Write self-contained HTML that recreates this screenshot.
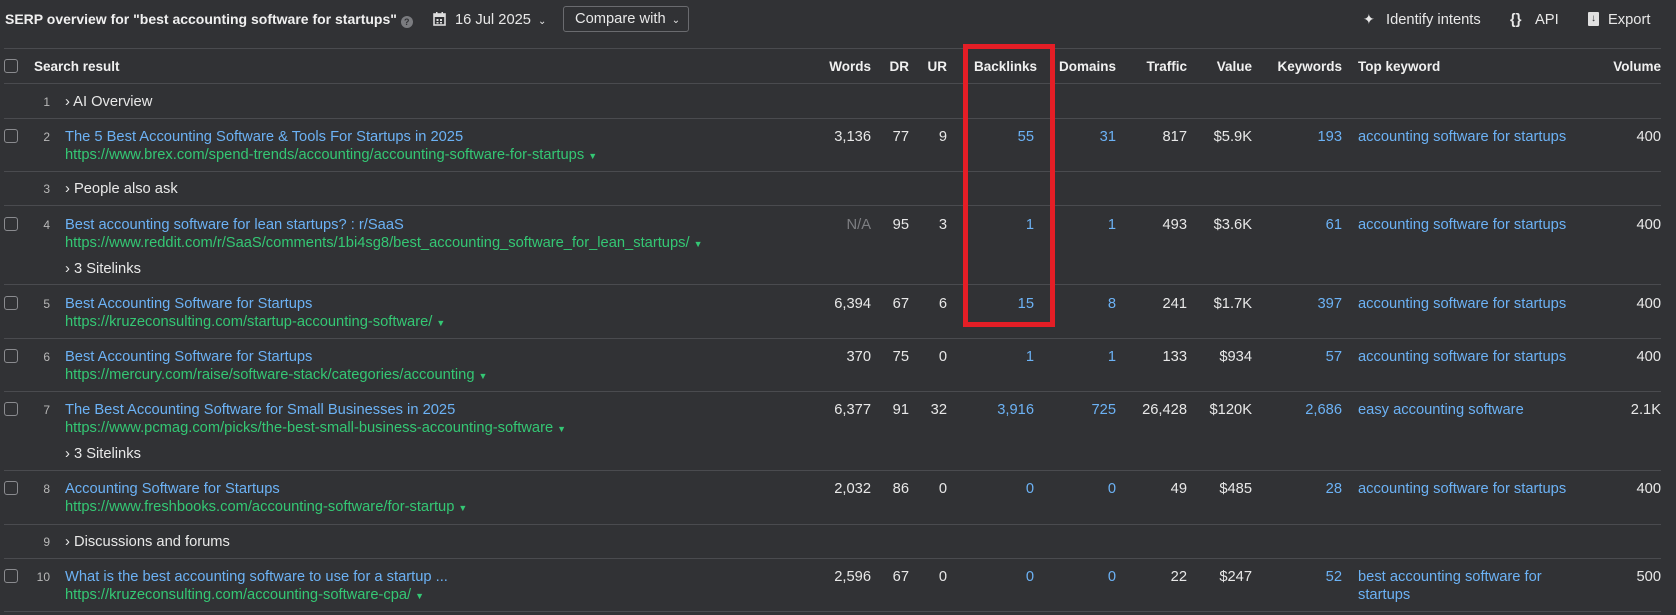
<!DOCTYPE html>
<html><head><meta charset="utf-8"><style>
*{margin:0;padding:0;box-sizing:border-box}
body{width:1676px;height:615px;background:#313235;color:#e8e8e8;font-family:"Liberation Sans",Arial,sans-serif;font-size:14.7px;position:relative;overflow:hidden}
.a{position:absolute;white-space:nowrap;line-height:20px}
.r{text-align:right}
.b{color:#6cb2f5}
.g{color:#34c774}
.line{position:absolute;left:4px;width:1657px;height:1px;background:#4a4b4f}
.cb{position:absolute;left:4px;width:14px;height:14px;border:1px solid #8a8b8f;border-radius:3px}
.n{color:#b8b8b8;font-size:12px}
.h{font-weight:bold;font-size:13.5px;color:#f0f0f0}
.tri{font-size:9px;margin-left:4px}
.two{line-height:18px;margin-top:1px}
</style></head><body>
<div class="a h" style="left:5px;top:9px;font-size:14px">SERP overview for "best accounting software for startups" <span style="display:inline-block;width:12px;height:12px;border-radius:50%;background:#7b7c80;vertical-align:-1px;font-size:9px;color:#313235;text-align:center;line-height:12px">?</span></div>
<svg class="a" style="left:433px;top:12px" width="13" height="14" viewBox="0 0 13 14"><rect x="1" y="2" width="11" height="11" fill="none" stroke="#ddd" stroke-width="1.6"/><rect x="1" y="2" width="11" height="3" fill="#ddd"/><rect x="3" y="0" width="1.5" height="3" fill="#ddd"/><rect x="8.5" y="0" width="1.5" height="3" fill="#ddd"/><rect x="3.5" y="7" width="2" height="2" fill="#ddd"/><rect x="7" y="7" width="2" height="2" fill="#ddd"/><rect x="3.5" y="10" width="2" height="1.5" fill="#ddd"/><rect x="7" y="10" width="2" height="1.5" fill="#ddd"/></svg>
<div class="a" style="left:455px;top:10px">16 Jul 2025 <span style="font-size:10px;margin-left:3px">&#8964;</span></div>
<div class="a" style="left:563px;top:6px;width:126px;height:26px;border:1px solid #6a6b6f;border-radius:3px;padding:2px 0 0 11px">Compare with <span style="font-size:10px;margin-left:2px">&#8964;</span></div>
<div class="a" style="left:1363px;top:9px;font-size:14px">&#10022;</div>
<div class="a" style="left:1386px;top:10px">Identify intents</div>
<div class="a" style="left:1510px;top:10px;font-weight:bold">{}</div>
<div class="a" style="left:1535px;top:10px">API</div>
<div class="a" style="left:1588px;top:12px;width:11px;height:14px;background:#e0e0e0;border-radius:1px;color:#313235;font-size:10px;line-height:14px;text-align:center;font-weight:bold">&#8595;</div>
<div class="a" style="left:1608px;top:10px">Export</div>

<div class="line" style="top:48px"></div>
<div class="cb" style="top:59px"></div>
<div class="a h" style="left:34px;top:57px">Search result</div>
<div class="a h r" style="right:805px;top:57px">Words</div>
<div class="a h r" style="right:767px;top:57px">DR</div>
<div class="a h r" style="right:729px;top:57px">UR</div>
<div class="a h" style="left:974px;top:57px">Backlinks</div>
<div class="a h r" style="right:560px;top:57px">Domains</div>
<div class="a h r" style="right:489px;top:57px">Traffic</div>
<div class="a h r" style="right:424px;top:57px">Value</div>
<div class="a h r" style="right:334px;top:57px">Keywords</div>
<div class="a h" style="left:1358px;top:57px">Top keyword</div>
<div class="a h r" style="right:15px;top:57px">Volume</div>

<div class="line" style="top:83px"></div>
<div class="a n r" style="right:1626px;top:92px">1</div>
<div class="a" style="left:65px;top:92px">› AI Overview</div>

<div class="line" style="top:118px"></div>
<div class="cb" style="top:129px"></div>
<div class="a n r" style="right:1626px;top:127px">2</div>
<div class="a b" style="left:65px;top:127px">The 5 Best Accounting Software &amp; Tools For Startups in 2025</div>
<div class="a g" style="left:65px;top:145px">https://www.brex.com/spend-trends/accounting/accounting-software-for-startups<span class="tri">▼</span></div>
<div class="a r" style="right:805px;top:127px">3,136</div>
<div class="a r" style="right:767px;top:127px">77</div>
<div class="a r" style="right:729px;top:127px">9</div>
<div class="a r b" style="right:642px;top:127px">55</div>
<div class="a r b" style="right:560px;top:127px">31</div>
<div class="a r" style="right:489px;top:127px">817</div>
<div class="a r" style="right:424px;top:127px">$5.9K</div>
<div class="a r b" style="right:334px;top:127px">193</div>
<div class="a b" style="left:1358px;top:127px">accounting software for startups</div>
<div class="a r" style="right:15px;top:127px">400</div>

<div class="line" style="top:171px"></div>
<div class="a n r" style="right:1626px;top:179px">3</div>
<div class="a" style="left:65px;top:179px">› People also ask</div>

<div class="line" style="top:205px"></div>
<div class="cb" style="top:217px"></div>
<div class="a n r" style="right:1626px;top:215px">4</div>
<div class="a b" style="left:65px;top:215px">Best accounting software for lean startups? : r/SaaS</div>
<div class="a g" style="left:65px;top:233px">https://www.reddit.com/r/SaaS/comments/1bi4sg8/best_accounting_software_for_lean_startups/<span class="tri">▼</span></div>
<div class="a" style="left:65px;top:259px">› 3 Sitelinks</div>
<div class="a r" style="right:805px;top:215px;color:#7d7e82">N/A</div>
<div class="a r" style="right:767px;top:215px">95</div>
<div class="a r" style="right:729px;top:215px">3</div>
<div class="a r b" style="right:642px;top:215px">1</div>
<div class="a r b" style="right:560px;top:215px">1</div>
<div class="a r" style="right:489px;top:215px">493</div>
<div class="a r" style="right:424px;top:215px">$3.6K</div>
<div class="a r b" style="right:334px;top:215px">61</div>
<div class="a b" style="left:1358px;top:215px">accounting software for startups</div>
<div class="a r" style="right:15px;top:215px">400</div>

<div class="line" style="top:284px"></div>
<div class="cb" style="top:296px"></div>
<div class="a n r" style="right:1626px;top:294px">5</div>
<div class="a b" style="left:65px;top:294px">Best Accounting Software for Startups</div>
<div class="a g" style="left:65px;top:312px">https://kruzeconsulting.com/startup-accounting-software/<span class="tri">▼</span></div>
<div class="a r" style="right:805px;top:294px">6,394</div>
<div class="a r" style="right:767px;top:294px">67</div>
<div class="a r" style="right:729px;top:294px">6</div>
<div class="a r b" style="right:642px;top:294px">15</div>
<div class="a r b" style="right:560px;top:294px">8</div>
<div class="a r" style="right:489px;top:294px">241</div>
<div class="a r" style="right:424px;top:294px">$1.7K</div>
<div class="a r b" style="right:334px;top:294px">397</div>
<div class="a b" style="left:1358px;top:294px">accounting software for startups</div>
<div class="a r" style="right:15px;top:294px">400</div>

<div class="line" style="top:338px"></div>
<div class="cb" style="top:349px"></div>
<div class="a n r" style="right:1626px;top:347px">6</div>
<div class="a b" style="left:65px;top:347px">Best Accounting Software for Startups</div>
<div class="a g" style="left:65px;top:365px">https://mercury.com/raise/software-stack/categories/accounting<span class="tri">▼</span></div>
<div class="a r" style="right:805px;top:347px">370</div>
<div class="a r" style="right:767px;top:347px">75</div>
<div class="a r" style="right:729px;top:347px">0</div>
<div class="a r b" style="right:642px;top:347px">1</div>
<div class="a r b" style="right:560px;top:347px">1</div>
<div class="a r" style="right:489px;top:347px">133</div>
<div class="a r" style="right:424px;top:347px">$934</div>
<div class="a r b" style="right:334px;top:347px">57</div>
<div class="a b" style="left:1358px;top:347px">accounting software for startups</div>
<div class="a r" style="right:15px;top:347px">400</div>

<div class="line" style="top:391px"></div>
<div class="cb" style="top:402px"></div>
<div class="a n r" style="right:1626px;top:400px">7</div>
<div class="a b" style="left:65px;top:400px">The Best Accounting Software for Small Businesses in 2025</div>
<div class="a g" style="left:65px;top:418px">https://www.pcmag.com/picks/the-best-small-business-accounting-software<span class="tri">▼</span></div>
<div class="a" style="left:65px;top:444px">› 3 Sitelinks</div>
<div class="a r" style="right:805px;top:400px">6,377</div>
<div class="a r" style="right:767px;top:400px">91</div>
<div class="a r" style="right:729px;top:400px">32</div>
<div class="a r b" style="right:642px;top:400px">3,916</div>
<div class="a r b" style="right:560px;top:400px">725</div>
<div class="a r" style="right:489px;top:400px">26,428</div>
<div class="a r" style="right:424px;top:400px">$120K</div>
<div class="a r b" style="right:334px;top:400px">2,686</div>
<div class="a b" style="left:1358px;top:400px">easy accounting software</div>
<div class="a r" style="right:15px;top:400px">2.1K</div>

<div class="line" style="top:470px"></div>
<div class="cb" style="top:481px"></div>
<div class="a n r" style="right:1626px;top:479px">8</div>
<div class="a b" style="left:65px;top:479px">Accounting Software for Startups</div>
<div class="a g" style="left:65px;top:497px">https://www.freshbooks.com/accounting-software/for-startup<span class="tri">▼</span></div>
<div class="a r" style="right:805px;top:479px">2,032</div>
<div class="a r" style="right:767px;top:479px">86</div>
<div class="a r" style="right:729px;top:479px">0</div>
<div class="a r b" style="right:642px;top:479px">0</div>
<div class="a r b" style="right:560px;top:479px">0</div>
<div class="a r" style="right:489px;top:479px">49</div>
<div class="a r" style="right:424px;top:479px">$485</div>
<div class="a r b" style="right:334px;top:479px">28</div>
<div class="a b" style="left:1358px;top:479px">accounting software for startups</div>
<div class="a r" style="right:15px;top:479px">400</div>

<div class="line" style="top:524px"></div>
<div class="a n r" style="right:1626px;top:532px">9</div>
<div class="a" style="left:65px;top:532px">› Discussions and forums</div>

<div class="line" style="top:558px"></div>
<div class="cb" style="top:569px"></div>
<div class="a n r" style="right:1626px;top:567px">10</div>
<div class="a b" style="left:65px;top:567px">What is the best accounting software to use for a startup ...</div>
<div class="a g" style="left:65px;top:585px">https://kruzeconsulting.com/accounting-software-cpa/<span class="tri">▼</span></div>
<div class="a r" style="right:805px;top:567px">2,596</div>
<div class="a r" style="right:767px;top:567px">67</div>
<div class="a r" style="right:729px;top:567px">0</div>
<div class="a r b" style="right:642px;top:567px">0</div>
<div class="a r b" style="right:560px;top:567px">0</div>
<div class="a r" style="right:489px;top:567px">22</div>
<div class="a r" style="right:424px;top:567px">$247</div>
<div class="a r b" style="right:334px;top:567px">52</div>
<div class="a b two" style="left:1358px;top:567px">best accounting software for<br>startups</div>
<div class="a r" style="right:15px;top:567px">500</div>
<div class="line" style="top:611px"></div>

<div style="position:absolute;left:963px;top:44px;width:92px;height:283px;border:5px solid #e41e26"></div>
</body></html>
